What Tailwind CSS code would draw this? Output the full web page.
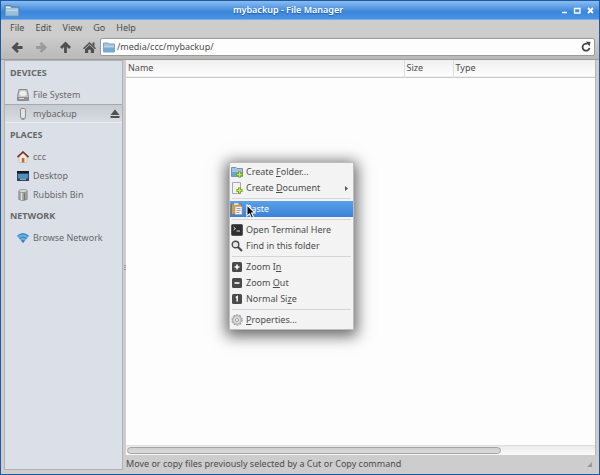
<!DOCTYPE html>
<html lang="en">

<head>
    <meta charset="UTF-8">
    <meta name="viewport" content="width=device-width, initial-scale=1.0">
    <title>mybackup - File Manager</title>
    <script src="https://cdn.jsdelivr.net/npm/@tailwindcss/browser@4"></script>
</head>

<body class="h-screen overflow-hidden bg-[#cdcdcd] font-['Noto_Sans','Open_Sans',sans-serif] text-[9px] leading-4 text-[#4c4c4c]">
    <div class="flex h-full flex-col border border-[#1f5a9f]">

        <!-- Title bar -->
        <header class="flex h-[19px] shrink-0 items-center border-b border-[#78aee8] bg-linear-to-b from-[#8abcf3] via-[#3a86db] via-60% to-[#4a93e3] px-[3px] text-white">
            <svg class="h-4 w-4" viewBox="0 0 16 16">
                <path d="M1 3.5h5.500l1 1.500h7.500v9.500H1z" fill="#7ea9c9" stroke="#5580a3" />
                <path d="M2 4.500h4l1 1.500h7v2H2z" fill="#e8e8e4" />
                <path d="M1.500 7h13v7h-13z" fill="#98c1de" stroke="#6f9fc3" />
                <path d="M2 7.500h12v1.500H2z" fill="#c3dcec" />
            </svg>
            <h1 class="flex-1 pr-1 text-center font-semibold [text-shadow:0_1px_1px_#1f5a9f]">mybackup - File Manager</h1>
            <div class="flex gap-[3px]">
                <button aria-label="Minimize">
                    <svg class="h-[10px] w-[10px]" viewBox="0 0 10 10"><path d="M2 7.5h5" stroke="#fff" stroke-width="1.5" /></svg>
                </button>
                <button aria-label="Maximize">
                    <svg class="h-[10px] w-[10px]" viewBox="0 0 10 10"><path d="M1.5 3.500h5.500v4.500h-5.500z" fill="none" stroke="#fff" stroke-width="1.3" /></svg>
                </button>
                <button aria-label="Close">
                    <svg class="h-[10px] w-[10px]" viewBox="0 0 10 10"><path d="M2 3l5 5M7 3l-5 5" stroke="#fff" stroke-width="1.8" /></svg>
                </button>
            </div>
        </header>

        <!-- Menu bar -->
        <nav class="flex h-[15px] shrink-0 items-center gap-[11px] px-[9px]">
            <button>File</button>
            <button>Edit</button>
            <button>View</button>
            <button>Go</button>
            <button>Help</button>
        </nav>

        <!-- Toolbar -->
        <div class="flex h-[25px] shrink-0 items-center border-b border-[#9c9c9c] bg-linear-to-b from-[#cdcdcd] to-[#b9b9b9] pr-1 pl-[10px]">
            <div class="flex gap-[11px]">
                <button aria-label="Back">
                    <svg class="h-[13px] w-[13px]" viewBox="0 0 13 13" fill="none" stroke="#4f4f4f" stroke-width="2.800"><path d="M7 2L2.500 6.500L7 11M3 6.500h8.500" /></svg>
                </button>
                <button aria-label="Forward" disabled>
                    <svg class="h-[13px] w-[13px]" viewBox="0 0 13 13" fill="none" stroke="#9b9b9b" stroke-width="2.800"><path d="M5.500 2L10 6.500L5.500 11M9.500 6.500H1" /></svg>
                </button>
                <button aria-label="Up">
                    <svg class="h-[13px] w-[13px]" viewBox="0 0 13 13" fill="none" stroke="#4f4f4f" stroke-width="2.800"><path d="M2 7L6.500 2.500L11 7M6.500 3v9" /></svg>
                </button>
                <button aria-label="Home">
                    <svg class="h-[13px] w-[13px]" viewBox="0 0 13 13" fill="#4f4f4f"><path d="M6.5 1L13 7.200l-1 1L6.500 3L1 8.200l-1-1zM9.500 1.500h2v4l-2-2zM2 8.200L6.500 4L11 8.200V12H7.800V8.800H5.200V12H2z" /></svg>
                </button>
            </div>
            <div class="ml-1 flex h-[18px] flex-1 items-center rounded-xs border border-[#9a9a9a] bg-[#fdfdfd] px-[2px]">
                <svg class="h-3 w-3" viewBox="0 0 12 12">
                    <path d="M0.5 2h4.500l1 1h5.500v8H0.500z" fill="#a9c4d8" stroke="#7fa0b8" />
                    <path d="M0 5h12v6H0z" fill="#73abd4" />
                    <path d="M1 5h10v1.500H1z" fill="#b5d5eb" />
                </svg>
                <input type="text" value="/media/ccc/mybackup/" aria-label="Location" class="min-w-0 flex-1 px-[2px] outline-none">
                <button aria-label="Reload">
                    <svg class="h-3 w-3" viewBox="0 0 12 12"><path d="M7.5 3A3.500 3.500 0 1 0 9.500 6.800" fill="none" stroke="#444" stroke-width="1.8" /><path d="M5.800 0.500l4.700 0.500L9.500 5.500z" fill="#444" /></svg>
                </button>
            </div>
        </div>

        <main class="flex min-h-0 flex-1 px-[3px]">

            <!-- Side pane -->
            <aside class="mb-1 w-[119px] shrink-0 border border-[#b2b2b2] bg-[#dbe0e8] text-[#686868]">
                <h2 class="h-6 pl-[5px] leading-6 font-bold">DEVICES</h2>
                <a href="#" class="flex h-[19px] items-center gap-1 pl-3">
                    <svg class="h-3 w-3" viewBox="0 0 12 12">
                        <path d="M2 0.500h8l1.500 7v4H0.500v-4z" fill="#c9c9c9" stroke="#8a8a8a" />
                        <ellipse cx="6" cy="4.500" rx="3.500" ry="2.500" fill="#eee" />
                        <path d="M1 8h10v3H1z" fill="#8f8f8f" />
                        <path d="M2 9.500h5" stroke="#ddd" />
                    </svg>
                    File System
                </a>
                <a href="#" class="flex h-[19px] items-center gap-1 border-t border-b border-t-[#a5a9b0] border-b-[#e9edf2] bg-linear-to-b from-[#c6cad1] to-[#d8dde4] pr-[2px] pl-3">
                    <svg class="h-3 w-3" viewBox="0 0 12 12">
                        <rect x="3.500" y="0.500" width="5" height="10" rx="1.500" fill="#e4e4e4" stroke="#8c8c8c" />
                        <path d="M4.500 10.500h3v1.500h-3z" fill="#9a9a9a" />
                    </svg>
                    <span class="flex-1">mybackup</span>
                    <svg class="h-[10px] w-[10px]" viewBox="0 0 10 10" fill="#505050"><path d="M5 0.500L9.500 6h-9zM0.500 7h9v2h-9z" /></svg>
                </a>

                <h2 class="h-6 pl-[5px] leading-6 font-bold">PLACES</h2>
                <a href="#" class="flex h-[19px] items-center gap-1 pl-3">
                    <svg class="h-3 w-3" viewBox="0 0 12 12">
                        <path d="M2 5.500L6 1.500L10 5.500V11.500H2z" fill="#f3e9dc" stroke="#b9a894" stroke-width="0.500" />
                        <path d="M0.500 6.200L6 1L11.500 6.200" fill="none" stroke="#743029" stroke-width="1.6" />
                        <path d="M4.800 7h2.600v4.500H4.800z" fill="#c7682e" />
                    </svg>
                    ccc
                </a>
                <a href="#" class="flex h-[19px] items-center gap-1 pl-3">
                    <svg class="h-3 w-3" viewBox="0 0 12 12">
                        <path d="M0 1h12v10H0z" fill="#28475f" />
                        <path d="M0 1h12v2H0z" fill="#151b20" />
                        <path d="M1 4h10v4.500H1z" fill="#4f8ebf" />
                        <path d="M3 8.500h6v1.500H3z" fill="#89a9c0" />
                    </svg>
                    Desktop
                </a>
                <a href="#" class="flex h-[19px] items-center gap-1 pl-3">
                    <svg class="h-3 w-3" viewBox="0 0 12 12">
                        <path d="M1.800 2v8.500q4.200 2 8.400 0V2z" fill="#a3a3a3" stroke="#7c7c7c" stroke-width="0.7" />
                        <path d="M4.500 3.500v7.500" stroke="#e2e2e2" stroke-width="1.4" />
                        <path d="M7.500 3.500v7.500" stroke="#757575" />
                        <ellipse cx="6" cy="2" rx="4.300" ry="1.500" fill="#ddd" stroke="#808080" stroke-width="0.7" />
                    </svg>
                    Rubbish Bin
                </a>

                <h2 class="h-6 pl-[5px] leading-6 font-bold">NETWORK</h2>
                <a href="#" class="flex h-[19px] items-center gap-1 pl-3">
                    <svg class="h-3 w-3" viewBox="0 0 12 12">
                        <path d="M0 4Q6 -1 12 4L6 11z" fill="#6db0e0" />
                        <path d="M0.500 4.200Q6 -0.500 11.500 4.200M2.500 6.800Q6 3.500 9.500 6.800" fill="none" stroke="#3f8ac8" stroke-width="1.4" />
                        <path d="M4 8.500Q6 7 8 8.500L6 11z" fill="#3a84c2" />
                    </svg>
                    Browse Network
                </a>
            </aside>

            <div class="flex w-[3px] shrink-0 flex-col items-center justify-center gap-px">
                <span class="h-px w-[2px] bg-[#999]"></span>
                <span class="h-px w-[2px] bg-[#999]"></span>
                <span class="h-px w-[2px] bg-[#999]"></span>
            </div>

            <section class="flex min-w-0 flex-1 flex-col">
                <!-- File list -->
                <div class="flex min-h-0 flex-1 flex-col border-r border-[#b8b8b8] bg-[#fdfdfd]">
                    <table class="w-full table-fixed border-collapse">
                        <thead>
                            <tr class="h-[17px] border-b border-[#c8c8c8] bg-linear-to-b from-[#f0f0f0] to-[#fdfdfd] text-left">
                                <th class="border-r border-[#ddd] p-0 pl-[2px] font-normal">Name</th>
                                <th class="w-[49px] border-r border-[#ddd] p-0 pl-[2px] font-normal">Size</th>
                                <th class="w-[142px] p-0 pl-[2px] font-normal">Type</th>
                            </tr>
                        </thead>
                        <tbody></tbody>
                    </table>
                    <div class="mt-auto h-[10px] border-t border-[#ddd] bg-linear-to-b from-[#ececec] to-[#fafafa] p-px">
                        <div class="h-[7px] w-4/5 rounded-full border border-[#a2a2a2] bg-linear-to-b from-[#cfcfcf] to-[#dcdcdc]"></div>
                    </div>
                </div>

                <!-- Status bar -->
                <footer class="flex h-[19px] shrink-0 items-center justify-between pr-1 pb-px">
                    <span>Move or copy files previously selected by a Cut or Copy command</span>
                    <svg class="h-[5px] w-[5px]" viewBox="0 0 5 5"><path d="M5 0v5H0z" fill="#999" /></svg>
                </footer>
            </section>
        </main>
    </div>

    <!-- Context menu -->
    <div role="menu" class="absolute top-[162px] left-[229px] w-[125px] border border-[#bdbdbd] bg-[#f3f3f3] py-px shadow-[0_3px_14px_3px_rgba(0,0,0,0.6)]">
        <button role="menuitem" class="flex h-4 w-full items-center gap-[3px] px-px">
            <svg class="h-3 w-3 overflow-visible" viewBox="0 0 12 12">
                <path d="M0.500 1.500h4.500l1 1h5.500v8H0.500z" fill="#a9c4d8" stroke="#7593aa" />
                <path d="M1 4.500h10v6H1z" fill="#6ba4cf" />
                <path d="M1 4.500h10v1.500H1z" fill="#a9cce5" />
                <path d="M8.500 5.500v6M5.500 8.500h6" stroke="#6d9a1c" stroke-width="3" />
                <path d="M8.500 6.200v4.600M6.200 8.500h4.600" stroke="#c6e95a" stroke-width="1.4" />
            </svg>
            <span>Create <u>F</u>older...</span>
        </button>
        <button role="menuitem" class="flex h-4 w-full items-center gap-[3px] px-px">
            <svg class="h-3 w-3 overflow-visible" viewBox="0 0 12 12">
                <path d="M1.500 0.500h8v11h-8z" fill="#f2f2f2" stroke="#a8a8a8" />
                <path d="M8.500 5.500v6M5.500 8.500h6" stroke="#6d9a1c" stroke-width="3" />
                <path d="M8.500 6.200v4.600M6.200 8.500h4.600" stroke="#c6e95a" stroke-width="1.4" />
            </svg>
            <span class="flex-1 text-left">Create <u>D</u>ocument</span>
            <svg class="mr-1 h-[5px] w-[3px]" viewBox="0 0 3 5"><path d="M0 0l3 2.500L0 5z" fill="#555" /></svg>
        </button>
        <hr class="mx-[2px] my-[2px] border-[#d6d6d6]">
        <button role="menuitem" class="flex h-4 w-full items-center gap-[3px] bg-linear-to-b from-[#5a9fe8] to-[#3883d8] px-px text-white">
            <svg class="h-3 w-3" viewBox="0 0 12 12">
                <path d="M0.500 1h10v10.500h-10z" fill="#d39a52" stroke="#9a6a2c" stroke-width="0.8" />
                <path d="M3 0h4.500v2H3z" fill="#ddd" />
                <path d="M4 3.500h7v8H4z" fill="#f4f4f4" stroke="#999" stroke-width="0.6" />
                <path d="M5.500 5.500h4M5.500 7.500h4M5.500 9.500h3" stroke="#888" stroke-width="0.8" />
            </svg>
            <span><u>P</u>aste</span>
        </button>
        <hr class="mx-[2px] my-[2px] border-[#d6d6d6]">
        <button role="menuitem" class="flex h-4 w-full items-center gap-[3px] px-px">
            <svg class="h-3 w-3" viewBox="0 0 12 12">
                <rect x="0.500" y="0.500" width="11" height="11" rx="1" fill="#2f2f2f" stroke="#555" />
                <path d="M2.500 3l2 1.500L2.500 6M5.500 7h3.500" fill="none" stroke="#ddd" />
            </svg>
            <span>Open Terminal Here</span>
        </button>
        <button role="menuitem" class="flex h-4 w-full items-center gap-[3px] px-px">
            <svg class="h-3 w-3" viewBox="0 0 12 12" fill="none" stroke="#4a4a4a">
                <circle cx="4.500" cy="4.500" r="3.300" fill="#e6e6e6" stroke-width="1.4" />
                <path d="M7 7l4 4" stroke-width="2.2" />
            </svg>
            <span>Find in this folder</span>
        </button>
        <hr class="mx-[2px] my-[2px] border-[#d6d6d6]">
        <button role="menuitem" class="flex h-4 w-full items-center gap-[3px] px-px">
            <svg class="h-3 w-3" viewBox="0 0 12 12">
                <rect x="1" y="1" width="10" height="10" rx="1.500" fill="#4a4a4a" />
                <path d="M6 3.500v5M3.500 6h5" stroke="#fff" stroke-width="1.6" />
            </svg>
            <span>Zoom I<u>n</u></span>
        </button>
        <button role="menuitem" class="flex h-4 w-full items-center gap-[3px] px-px">
            <svg class="h-3 w-3" viewBox="0 0 12 12">
                <rect x="1" y="1" width="10" height="10" rx="1.500" fill="#4a4a4a" />
                <path d="M3.500 6h5" stroke="#fff" stroke-width="1.6" />
            </svg>
            <span>Zoom <u>O</u>ut</span>
        </button>
        <button role="menuitem" class="flex h-4 w-full items-center gap-[3px] px-px">
            <svg class="h-3 w-3" viewBox="0 0 12 12">
                <rect x="1" y="1" width="10" height="10" rx="1.500" fill="#4a4a4a" />
                <path d="M4.700 4.500L6.200 3.500V8.500" fill="none" stroke="#fff" stroke-width="1.4" />
            </svg>
            <span>Normal Si<u>z</u>e</span>
        </button>
        <hr class="mx-[2px] my-[2px] border-[#d6d6d6]">
        <button role="menuitem" class="flex h-4 w-full items-center gap-[3px] px-px">
            <svg class="h-3 w-3" viewBox="0 0 12 12" fill="none" stroke="#a4a4a4">
                <circle cx="6" cy="6" r="5" stroke-width="1.4" stroke-dasharray="1.960 1.180" />
                <circle cx="6" cy="6" r="4.200" fill="#dedede" />
                <circle cx="6" cy="6" r="1.600" fill="#f3f3f3" />
            </svg>
            <span><u>P</u>roperties...</span>
        </button>
    </div>

    <!-- Mouse pointer -->
    <svg class="absolute top-[204px] left-[246px] h-[15px] w-[10px]" viewBox="0 0 9 14">
        <path d="M0.700 0.800V11.300L3.100 9.200L4.900 13.200L6.900 12.300L5.100 8.400H8.300z" fill="#111" stroke="#fff" />
    </svg>
</body>

</html>
